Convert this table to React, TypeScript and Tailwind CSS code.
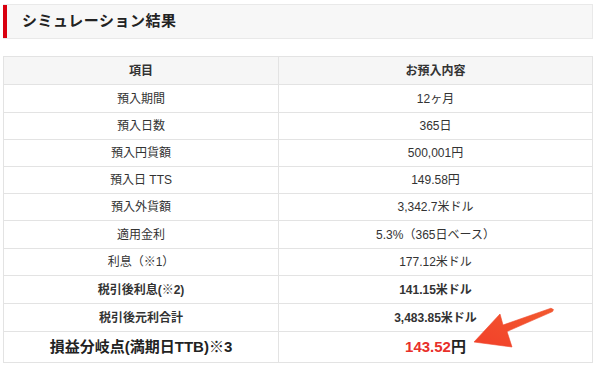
import React from "react";

const rows: { label: string; value: React.ReactNode; h: string; bold?: boolean }[] = [
  { label: "預入期間", value: "12ヶ月", h: "h-[28px]" },
  { label: "預入日数", value: "365日", h: "h-[27px]" },
  { label: "預入円貨額", value: "500,001円", h: "h-[27px]" },
  { label: "預入日 TTS", value: "149.58円", h: "h-[27px]" },
  { label: "預入外貨額", value: "3,342.7米ドル", h: "h-[27px]" },
  { label: "適用金利", value: "5.3%（365日ベース）", h: "h-[28px]" },
  { label: "利息（※1）", value: "177.12米ドル", h: "h-[27px]" },
  { label: "税引後利息(※2)", value: "141.15米ドル", h: "h-[28px]", bold: true },
  { label: "税引後元利合計", value: "3,483.85米ドル", h: "h-[28px]", bold: true },
];

export default function App() {
  return (
    <div
      className="relative w-[600px] h-[367px] bg-white text-[#333] overflow-hidden"
      style={{ fontFamily: '"Liberation Sans", "Noto Sans CJK JP", sans-serif' }}
    >
      <div className="pt-[4px] pl-[3px] w-[593px]">
        <div className="flex h-[35px] bg-[#f7f7f7] border border-[#e9e9e9] border-l-0">
          <div className="w-[4px] bg-[#d9000f]" />
          <div className="flex items-center pl-[15px] text-[15px] font-bold text-[#222] tracking-[0.5px]">
            シミュレーション結果
          </div>
        </div>

        <div className="mt-[17px] border border-[#e3e3e3] text-[12px]">
          <div className="grid grid-cols-[275px_1fr] h-[28px] border-b border-[#e3e3e3] bg-[#f6f6f6] font-bold">
            <div className="flex items-center justify-center border-r border-[#e3e3e3]">項目</div>
            <div className="flex items-center justify-center">お預入内容</div>
          </div>
          {rows.map((r) => (
            <div
              key={r.label}
              className={`grid grid-cols-[275px_1fr] ${r.h} border-b border-[#e3e3e3] ${r.bold ? "font-bold" : ""}`}
            >
              <div className="flex items-center justify-center border-r border-[#e3e3e3]">{r.label}</div>
              <div className="flex items-center justify-center">{r.value}</div>
            </div>
          ))}
          <div className="grid grid-cols-[275px_1fr] h-[30px] font-bold text-[15px]">
            <div className="flex items-center justify-center border-r border-[#e3e3e3] text-[#222]">
              損益分岐点(満期日TTB)※3
            </div>
            <div className="flex items-center justify-center">
              <span className="text-[#e8302a]">143.52</span>
              <span className="text-[#222]">円</span>
            </div>
          </div>
        </div>
      </div>

      <svg
        className="absolute left-0 top-0 pointer-events-none"
        width="600"
        height="367"
        viewBox="0 0 600 367"
      >
        <defs>
          <linearGradient id="ag" x1="0" y1="1" x2="1" y2="0">
            <stop offset="0" stopColor="#f2402a" />
            <stop offset="1" stopColor="#f25a2e" />
          </linearGradient>
        </defs>
        <polygon
          points="474,342 500,314 503,325 551,308.2 553.5,309.6 552.5,311.6 507,331.5 512,347"
          fill="url(#ag)"
          stroke="#f0462b"
          strokeWidth="0.6"
          strokeLinejoin="round"
        />
      </svg>
    </div>
  );
}
